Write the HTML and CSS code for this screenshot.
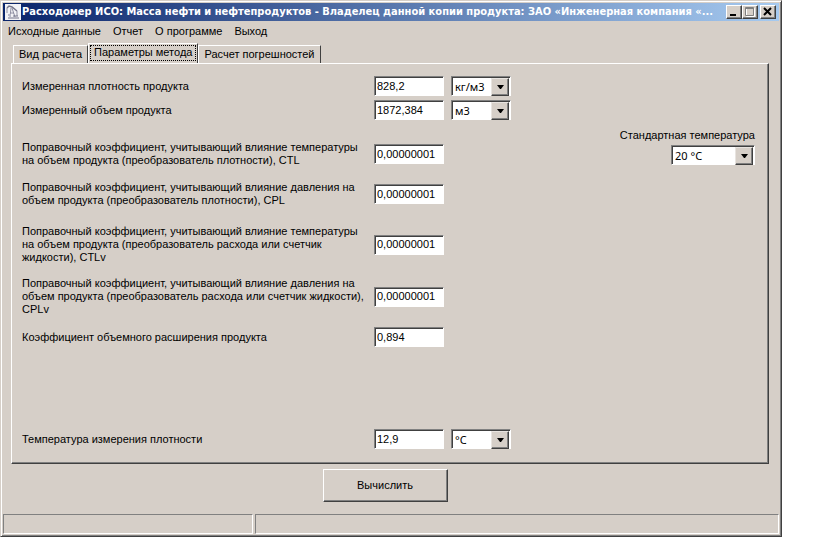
FILE: index.html
```html
<!DOCTYPE html>
<html lang="ru">
<head>
  <meta charset="UTF-8" />
  <meta name="viewport" content="width=device-width, initial-scale=1.0"/>
  <title>Расходомер ИСО</title>
  <link rel="stylesheet" href="styles.css">
</head>
<body>
  <div class="window">
    <header class="titlebar">
      <svg class="app-icon" viewBox="0 0 16 16" aria-hidden="true">
        <rect width="16" height="16" fill="#f2f2f6"/>
        <path d="M2 4 L4 2 L7 3 L12 7" fill="none" stroke="#77778c" stroke-width="1.500"/>
        <path d="M2 4 V9 M6 4 L5 13 M7 4 L10 13 M6 9 H9 M12 7 V12" fill="none" stroke="#9090a4"/>
        <path d="M3 14 H14 M8 12 H13" stroke="#77778c"/>
        <path d="M3 11 H6" stroke="#b8b8c8" stroke-width="2"/>
      </svg>
      <h1>Расходомер ИСО: Масса нефти и нефтепродуктов - Владелец данной копии продукта: ЗАО «Инженерная компания «...</h1>
      <div class="title-buttons">
        <button aria-label="Свернуть"><svg viewBox="0 0 12 10"><path d="M2 8H8" stroke="#000" stroke-width="2"/></svg></button>
        <button aria-label="Развернуть" disabled><svg viewBox="0 0 12 10"><path d="M2.500 1.500H10.500V9.500H2.500Z" fill="none" stroke="#fff"/><path d="M1.500 0.500H9.500V8.500H1.500Z M1.500 1.500H9.500" fill="none" stroke="#808080"/></svg></button>
        <button class="close" aria-label="Закрыть"><svg viewBox="0 0 12 10"><path d="M2 1L9 8M9 1L2 8" stroke="#000" stroke-width="2"/></svg></button>
      </div>
    </header>

    <nav class="menu">
      <a href="#">Исходные данные</a>
      <a href="#">Отчет</a>
      <a href="#">О программе</a>
      <a href="#">Выход</a>
    </nav>

    <main>
      <div class="tabs" role="tablist">
        <button role="tab">Вид расчета</button>
        <button role="tab" class="active" aria-selected="true">Параметры метода</button>
        <button role="tab">Расчет погрешностей</button>
      </div>

      <form class="panel" id="params">
        <div class="fields">
          <div class="row">
            <label for="density">Измеренная плотность продукта</label>
            <input type="text" id="density" value="828,2">
            <span class="combo"><select aria-label="Единица плотности"><option>кг/м3</option></select></span>
          </div>
          <div class="row">
            <label for="volume">Измеренный объем продукта</label>
            <input type="text" id="volume" value="1872,384">
            <span class="combo"><select aria-label="Единица объема"><option>м3</option></select></span>
          </div>
          <div class="row ctl">
            <label for="ctl">Поправочный коэффициент, учитывающий влияние температуры<br>на объем продукта (преобразователь плотности), CTL</label>
            <input type="text" id="ctl" value="0,00000001">
          </div>
          <div class="row cpl">
            <label for="cpl">Поправочный коэффициент, учитывающий влияние давления на<br>объем продукта (преобразователь плотности), CPL</label>
            <input type="text" id="cpl" value="0,00000001">
          </div>
          <div class="row ctlv">
            <label for="ctlv">Поправочный коэффициент, учитывающий влияние температуры<br>на объем продукта (преобразователь расхода или счетчик<br>жидкости), CTLv</label>
            <input type="text" id="ctlv" value="0,00000001">
          </div>
          <div class="row cplv">
            <label for="cplv">Поправочный коэффициент, учитывающий влияние давления на<br>объем продукта (преобразователь расхода или счетчик жидкости),<br>CPLv</label>
            <input type="text" id="cplv" value="0,00000001">
          </div>
          <div class="row expansion">
            <label for="expansion">Коэффициент объемного расширения продукта</label>
            <input type="text" id="expansion" value="0,894">
          </div>
          <div class="row last">
            <label for="temp">Температура измерения плотности</label>
            <input type="text" id="temp" value="12,9">
            <span class="combo"><select aria-label="Единица температуры"><option>°C</option></select></span>
          </div>
        </div>

        <div class="standard">
          <label for="standard">Стандартная температура</label>
          <span class="combo"><select id="standard"><option>20 °C</option></select></span>
        </div>
      </form>

      <button class="calc" form="params">Вычислить</button>
    </main>

    <footer class="statusbar">
      <div></div>
      <div></div>
    </footer>
  </div>
</body>
</html>
```

FILE: styles.css
```css
* {
  box-sizing: border-box;
}
body {
  margin: 0;
  background: #fff;
  color: #000;
  font: 11px/13px "Liberation Sans", Arial, sans-serif;
}
button, input, select {
  font: inherit;
  color: inherit;
  border-radius: 0;
  margin: 0;
}
.window {
  display: flex;
  flex-direction: column;
  min-height: 100vh;
  margin-right: 37px;
  padding: 1px;
  background: #d6cfc8;
  border: 1px solid;
  border-color: #d6cfc8 #404040 #404040 #d6cfc8;
  box-shadow: inset 1px 1px #fff, inset -1px -1px #808080;
}

/* title bar */
.titlebar {
  display: flex;
  align-items: center;
  height: 18px;
  margin: 1px 1px 0;
  padding: 0 3px 0 2px;
  background: linear-gradient(to right, #0a246a, #a6caf0);
  color: #fff;
}
.app-icon {
  flex: none;
  width: 16px;
  height: 16px;
}
h1 {
  flex: 1;
  min-width: 0;
  margin: 0 2px 0 1px;
  overflow: hidden;
  white-space: nowrap;
  font: bold 11px/18px "DejaVu Sans Condensed", "DejaVu Sans", sans-serif;
}
.title-buttons {
  display: flex;
}
.title-buttons button {
  width: 16px;
  height: 14px;
  padding: 0 1px;
  background: #d6cfc8;
  border: 1px solid;
  border-color: #fff #404040 #404040 #fff;
  box-shadow: inset -1px -1px #808080;
}
.title-buttons svg {
  display: block;
  width: 12px;
  height: 10px;
}
.title-buttons .close {
  margin-left: 2px;
}

/* menu */
.menu {
  display: flex;
  gap: 12px;
  padding: 4px 6px 0;
}
.menu a {
  color: inherit;
  text-decoration: none;
}

/* tabs */
main {
  flex: 1;
  display: flex;
  flex-direction: column;
  padding: 5px 11px 12px 9px;
}
.tabs {
  display: flex;
  align-items: flex-end;
  padding-left: 2px;
}
.tabs button {
  height: 18px;
  padding: 0 5px;
  background: #d6cfc8;
  border: 1px solid;
  border-color: #fff #404040 transparent #fff;
  border-bottom: 0;
  white-space: nowrap;
}
.tabs .active {
  height: 20px;
  padding: 0 5px 2px;
  outline: 1px dotted #000;
  outline-offset: -3px;
}
.panel {
  flex: 1;
  display: flex;
  justify-content: space-between;
  padding: 12px 13px 14px 10px;
  border: 1px solid;
  border-color: #fff #404040 #404040 #fff;
  box-shadow: inset -1px -1px #808080;
}

/* fields */
.fields {
  display: flex;
  flex-direction: column;
}
.row {
  display: grid;
  grid-template-columns: 345px 70px 60px;
  column-gap: 7px;
  align-items: center;
  margin-bottom: 4px;
}
.row label {
  white-space: nowrap;
}
.ctl {
  margin-top: 17px;
}
.cpl {
  margin-top: 10px;
}
.ctlv {
  margin-top: 14px;
}
.cplv {
  margin-top: 9px;
}
.expansion {
  margin-top: 7px;
}
.last {
  margin-top: auto;
  margin-bottom: 0;
}
input, .combo {
  height: 20px;
  background: #fff;
  border: 1px solid;
  border-color: #808080 #fff #fff #808080;
  box-shadow: inset 1px 1px #404040;
}
input {
  width: 100%;
  padding: 0 2px 1px 2px;
}
.combo {
  position: relative;
  display: block;
}
select {
  display: block;
  width: 100%;
  height: 18px;
  padding: 0 18px 0 3px;
  background: none;
  border: 0;
  appearance: none;
  font: 11px/13px "Noto Sans", sans-serif;
}
.combo::after {
  content: "";
  position: absolute;
  top: 1px;
  right: 1px;
  width: 16px;
  height: 16px;
  background: #d6cfc8 url("data:image/svg+xml,%3Csvg xmlns='http://www.w3.org/2000/svg' width='7' height='4'%3E%3Cpath d='M0 0H7L4 4H3Z'/%3E%3C/svg%3E") no-repeat center;
  border: 1px solid;
  border-color: #e8e4e0 #404040 #404040 #e8e4e0;
  box-shadow: inset -1px -1px #808080;
  pointer-events: none;
}
.standard {
  display: flex;
  flex-direction: column;
  align-items: flex-end;
  gap: 3px;
  padding-top: 53px;
}
.standard .combo {
  width: 84px;
}

/* bottom */
.calc {
  align-self: center;
  width: 125px;
  height: 33px;
  margin: 5px 10px 0 0;
  background: #d6cfc8;
  border: 1px solid;
  border-color: #fff #404040 #404040 #fff;
  box-shadow: inset -1px -1px #808080;
}
.statusbar {
  display: grid;
  grid-template-columns: 250px 1fr;
  column-gap: 2px;
  height: 20px;
  margin: 0 1px 1px;
}
.statusbar div {
  border: 1px solid;
  border-color: #808080 #fff #fff #808080;
}
```
